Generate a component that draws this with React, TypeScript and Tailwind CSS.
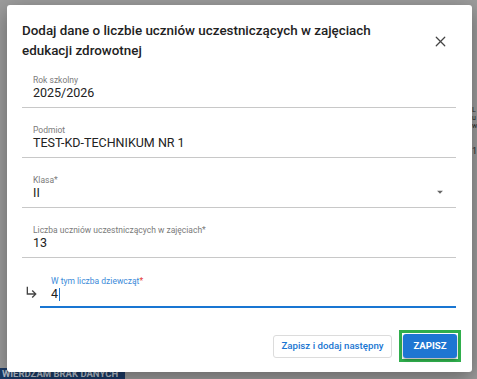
import React from 'react';
import { X } from 'lucide-react';

const font = { fontFamily: 'Roboto, "Noto Sans", sans-serif' };

const Field: React.FC<{ label: string; value: string; first?: boolean; select?: boolean }> = ({ label, value, first, select }) => (
  <div className={`${first ? 'pt-[14px]' : 'pt-[17px]'} pb-[6px] pl-[11px] pr-[12px] border-b border-[#c8c8c8] relative`}>
    <div className="h-[10px] text-[8.5px] leading-[10px] text-[#7a7a7a]">{label}</div>
    <div className="h-[16px] text-[12.5px] leading-[16px] text-[#222]">{value}</div>
    {select && (
      <svg viewBox="0 0 24 24" className="absolute right-[9px] top-[27px] w-[14px] h-[14px] fill-[#666]">
        <path d="M7 10l5 5 5-5z" />
      </svg>
    )}
  </div>
);

const App: React.FC = () => {
  return (
    <div className="relative w-[477px] h-[379px] overflow-hidden bg-[#9c9c9c]" style={font}>
      {/* page behind the overlay */}
      <div className="absolute left-0 top-[368px] w-[125px] h-[11px] bg-[#1b3a66] text-[9.5px] font-bold leading-[11px] text-[#b9c2cf] pl-[2px] whitespace-nowrap overflow-hidden">
        WIERDZAM BRAK DANYCH
      </div>
      <div className="absolute left-[472px] top-[106px] text-[7px] leading-[8px] text-[#2a2a2a]">L<br />u<br />w</div>
      <div className="absolute left-[472px] top-[146px] text-[9px] leading-[10px] text-[#2a2a2a]">1</div>

      {/* dialog */}
      <div className="absolute left-[7px] top-[5px] w-[465px] h-[367px] bg-white rounded-[3px] shadow-[0_6px_20px_rgba(0,0,0,0.35)] px-[15px] flex flex-col">
        <div className="flex pt-[16px]">
          <h2 className="flex-1 text-[13.4px] leading-[20px] font-medium text-[#222]">
            Dodaj dane o liczbie uczniów uczestniczących w zajęciach edukacji zdrowotnej
          </h2>
          <button className="w-[70px] flex justify-end pr-[8px] pt-[12px] items-start text-[#444]">
            <X size={17} strokeWidth={1.7} />
          </button>
        </div>

        <div className="pr-[1px]">
          <Field first label="Rok szkolny" value="2025/2026" />
          <Field label="Podmiot" value="TEST-KD-TECHNIKUM NR 1" />
          <Field label="Klasa*" value="II" select />
          <Field label="Liczba uczniów uczestniczących w zajęciach*" value="13" />
          <div className="flex items-end">
            <div className="w-[18px] h-[36px] flex items-center justify-start pl-[2px]">
              <svg viewBox="0 0 24 24" className="w-[16px] h-[16px] fill-[#444] mt-[4px]">
                <path d="M19 15l-6 6-1.42-1.42L15.17 16H4V4h2v10h9.17l-3.59-3.58L13 9l6 6z" />
              </svg>
            </div>
            <div className="flex-1 pt-[18px] pb-[4px] pl-[11px] border-b-2 border-[#1976d2]">
              <div className="h-[10px] text-[8.5px] leading-[10px] text-[#3b8ad9]">
                W tym liczba dziewcząt<span className="text-[#e53935]">*</span>
              </div>
              <div className="h-[16px] text-[12.5px] leading-[16px] text-[#222] flex items-center">
                4<span className="inline-block w-[1px] h-[13px] bg-[#1976d2] ml-[1px]" />
              </div>
            </div>
          </div>
        </div>

        <div className="flex justify-end items-center gap-[11px] mt-[26px]">
          <button className="h-[23px] w-[119px] rounded-[3px] border border-[#dcdcdc] bg-white text-[9.7px] font-medium text-[#1976d2] flex items-center justify-center">
            Zapisz i dodaj następny
          </button>
          <div className="border-[3px] border-[#2fae4c] p-[1px] -m-[4px]">
            <button className="h-[24px] w-[54px] rounded-[3px] bg-[#1e76d2] text-white text-[9.6px] font-bold shadow-[0_2px_3px_rgba(0,0,0,0.3)] flex items-center justify-center">
              ZAPISZ
            </button>
          </div>
        </div>
      </div>
    </div>
  );
};

export default App;
